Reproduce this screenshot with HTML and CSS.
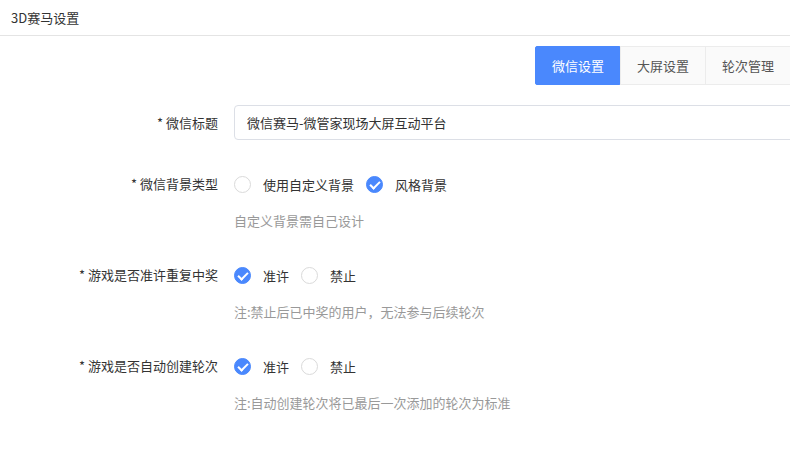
FILE: index.html
```html
<!DOCTYPE html>
<html>
    <head>
        <meta charset="utf-8" />
        <title>3D赛马设置</title>
        <link rel="stylesheet" href="styles.css">
    </head>

    <body>
        <div id="header">3D赛马设置</div>

        <div id="tabs">
            <button class="tab active">微信设置</button>
            <button class="tab">大屏设置</button>
            <button class="tab">轮次管理</button>
        </div>

        <div id="form">
            <div class="item">
                <div class="label input-label">* 微信标题</div>
                <div class="control">
                    <input class="text" type="text" value="微信赛马-微管家现场大屏互动平台">
                </div>
            </div>

            <div class="item">
                <div class="label">* 微信背景类型</div>
                <div class="control">
                    <div class="radios">
                        <span class="radio"></span><span class="radio-text">使用自定义背景</span>
                        <span class="radio checked"></span><span class="radio-text">风格背景</span>
                    </div>
                    <div class="hint">自定义背景需自己设计</div>
                </div>
            </div>

            <div class="item">
                <div class="label">* 游戏是否准许重复中奖</div>
                <div class="control">
                    <div class="radios">
                        <span class="radio checked"></span><span class="radio-text">准许</span>
                        <span class="radio"></span><span class="radio-text">禁止</span>
                    </div>
                    <div class="hint">注:禁止后已中奖的用户，无法参与后续轮次</div>
                </div>
            </div>

            <div class="item">
                <div class="label">* 游戏是否自动创建轮次</div>
                <div class="control">
                    <div class="radios">
                        <span class="radio checked"></span><span class="radio-text">准许</span>
                        <span class="radio"></span><span class="radio-text">禁止</span>
                    </div>
                    <div class="hint">注:自动创建轮次将已最后一次添加的轮次为标准</div>
                </div>
            </div>
        </div>
    </body>
</html>
```

FILE: styles.css
```css
body{
    margin: 0;
    background-color: white;
    font-family: "Microsoft YaHei", "Noto Sans CJK SC", sans-serif;
    font-size: 13px;
    color: #333;
    overflow: hidden;
}
#header{
    height: 36px;
    line-height: 35px;
    padding-left: 11px;
    border-bottom: 1px solid #e4e4e4;
    box-sizing: border-box;
}
#tabs{
    display: flex;
    margin-top: 10px;
    padding-left: 535px;
    width: 900px;
}
.tab{
    flex: none;
    width: 86px;
    height: 39px;
    border: 1px solid #ececec;
    margin-right: -1px;
    background-color: #fafafa;
    color: #555;
    font-family: inherit;
    font-size: 13px;
    padding: 0;
}
.tab.active{
    background-color: #4a88fd;
    border-color: #4a88fd;
    color: white;
    border-radius: 2px;
}
#form{
    margin-top: 20px;
}
.item{
    display: flex;
    margin-bottom: 34px;
}
.label{
    width: 218px;
    padding-right: 16px;
    text-align: right;
    line-height: 20px;
    flex: none;
}
.input-label{
    line-height: 35px;
}
.control{
    flex: 1;
}
.text{
    width: 620px;
    height: 35px;
    box-sizing: border-box;
    border: 1px solid #dcdfe6;
    border-radius: 4px;
    padding: 0 12px;
    font-family: inherit;
    font-size: 13px;
    color: #333;
    outline: none;
}
.radios{
    display: flex;
    align-items: center;
    height: 20px;
}
.radio{
    width: 15px;
    height: 15px;
    border: 1px solid #dadada;
    border-radius: 50%;
    box-sizing: content-box;
    position: relative;
}
.radio.checked{
    background-color: #4a88fd;
    border-color: #4a88fd;
}
.radio.checked::after{
    content: "";
    position: absolute;
    left: 5px;
    top: 2px;
    width: 4px;
    height: 8px;
    border: solid white;
    border-width: 0 2.5px 2.5px 0;
    transform: rotate(45deg);
}
.radio-text{
    margin-left: 12px;
    margin-right: 12px;
}
.hint{
    margin-top: 17px;
    line-height: 20px;
    color: #999;
}
```
